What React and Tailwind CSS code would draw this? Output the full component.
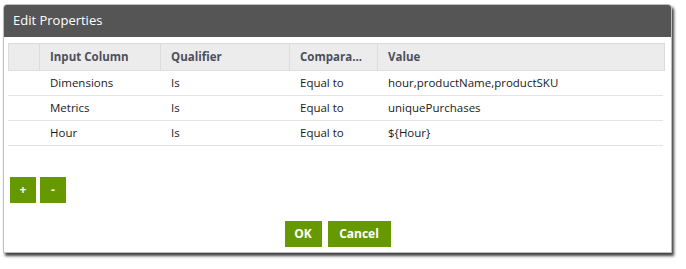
const ROWS = [
  { column: 'Dimensions', qualifier: 'Is', comparator: 'Equal to', value: 'hour,productName,productSKU' },
  { column: 'Metrics', qualifier: 'Is', comparator: 'Equal to', value: 'uniquePurchases' },
  { column: 'Hour', qualifier: 'Is', comparator: 'Equal to', value: '${Hour}' },
]

function HeaderCell({ children, className = '' }) {
  return (
    <div className={`flex items-center pl-[10px] border-r border-[#dcdcdc] font-bold text-[#4d4f5c] ${className}`}>
      {children}
    </div>
  )
}

function GreenButton({ children, className = '' }) {
  return (
    <button className={`h-[26px] bg-[#669900] text-white font-bold text-[12px] ${className}`}>
      {children}
    </button>
  )
}

export default function App() {
  return (
    <div className="w-[686px] h-[269px] bg-white pt-[4px] pl-[3px] font-['Open_Sans',sans-serif]">
      <div className="w-[669px] h-[249px] bg-white rounded-t-[4px] border border-[#bdbdbd] shadow-[2px_3px_3px_rgba(0,0,0,0.75)] flex flex-col overflow-hidden">
        {/* Title bar */}
        <div className="h-[32px] bg-[#555555] text-white text-[13px] flex items-center pl-[9px] shrink-0">
          Edit Properties
        </div>

        {/* Table */}
        <div className="mt-[6px] ml-[4px] w-[657px] text-[11.5px]">
          <div className="grid grid-cols-[31px_121px_129px_88px_1fr] h-[28px] bg-[#ececec] border border-[#dcdcdc]">
            <div className="border-r border-[#dcdcdc]" />
            <HeaderCell>Input Column</HeaderCell>
            <HeaderCell>Qualifier</HeaderCell>
            <HeaderCell>Compara...</HeaderCell>
            <HeaderCell className="border-r-0">Value</HeaderCell>
          </div>
          {ROWS.map((r) => (
            <div
              key={r.column}
              className="grid grid-cols-[31px_121px_129px_88px_1fr] h-[25px] border-b border-[#e3e3e3] text-[#1a1a1a] mr-[2px]"
            >
              <div />
              <div className="flex items-center pl-[11px]">{r.column}</div>
              <div className="flex items-center pl-[11px]">{r.qualifier}</div>
              <div className="flex items-center pl-[11px]">{r.comparator}</div>
              <div className="flex items-center pl-[11px]">{r.value}</div>
            </div>
          ))}
        </div>

        {/* Add / remove */}
        <div className="flex gap-[4px] mt-[31px] ml-[6px]">
          <GreenButton className="w-[26px]">+</GreenButton>
          <GreenButton className="w-[26px]">-</GreenButton>
        </div>

        {/* Footer */}
        <div className="flex justify-center gap-[6px] mt-[18px]">
          <GreenButton className="w-[37px]">OK</GreenButton>
          <GreenButton className="w-[63px]">Cancel</GreenButton>
        </div>
      </div>
    </div>
  )
}
